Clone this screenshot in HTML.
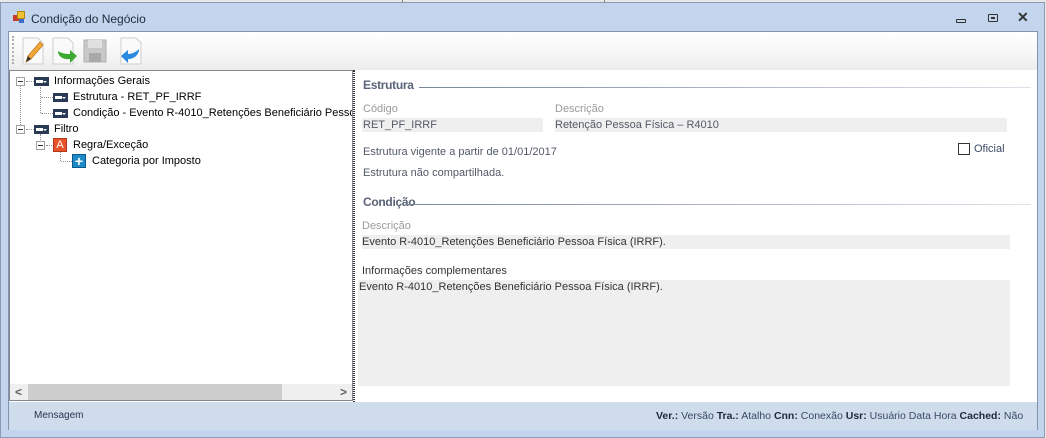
<!DOCTYPE html>
<html><head><meta charset="utf-8"><style>
*{margin:0;padding:0;box-sizing:border-box}
body{width:1046px;height:438px;overflow:hidden;background:#e8e8e8;font-family:"Liberation Sans",sans-serif;font-size:11px;line-height:14px;position:relative}
.abs{position:absolute}
.frame{left:0;top:2px;width:1045px;height:436px;background:#c3d5ec;border:1px solid #8a9bb3}
.title{left:31px;top:12px;font-size:12px;color:#1e2a3a}
.client{left:8px;top:31px;width:1030px;height:399px;background:#fff;border:1px solid #8193ad}
.tb{left:9px;top:32px;width:1028px;height:38px;background:linear-gradient(#ffffff,#f6f6f6 60%,#ececec)}
.tree{left:9px;top:70px;width:344px;height:331px;background:#fff;border:1px solid #828790;overflow:hidden}
.t{position:absolute;color:#000;white-space:nowrap;font-size:11px}
.ico{position:absolute;width:15px;height:9px;background:#2a3a56;border:1px solid #2a3a56}
.ico:before{content:"";position:absolute;left:1px;top:2px;width:7px;height:3px;background:#fff}
.ico:after{content:"";position:absolute;right:1px;top:3px;border:2px solid transparent;border-top:2px solid #fff}
.pm{position:absolute;width:9px;height:9px;border:1px solid #a0a0a0;background:#fff}
.pm:after{content:"";position:absolute;left:1px;top:3px;width:5px;height:1px;background:#333}
.dv{position:absolute;border-left:1px dotted #999;width:0}
.dh{position:absolute;border-top:1px dotted #999;height:0}
.lbl{position:absolute;color:#9a9a9a;white-space:nowrap}
.val{position:absolute;color:#525a66;white-space:nowrap}
.fld{position:absolute;background:#efefef}
.h{position:absolute;font-weight:bold;color:#5a6478;font-size:12px;letter-spacing:-0.3px}
.status{left:9px;top:402px;width:1028px;height:28px;background:#cfdcec}
</style></head><body>
<div class="abs frame"></div>
<div class="abs" style="left:402px;top:0;width:1px;height:3px;background:#888"></div>
<div class="abs" style="left:604px;top:0;width:1px;height:3px;background:#888"></div>
<div class="abs" style="left:13px;top:15px;width:6px;height:6px;background:#c83a2a"></div>
<div class="abs" style="left:17px;top:11px;width:8px;height:8px;background:#f2c230;border:1px solid #b08a10"></div>
<div class="abs" style="left:19px;top:19px;width:5px;height:4px;background:#3a6cc8"></div>
<div class="abs title">Condição do Negócio</div>
<div class="abs" style="left:956px;top:19px;width:10px;height:4px;border:1px solid #333;border-radius:1px"></div>
<div class="abs" style="left:988px;top:14px;width:10px;height:8px;border:1px solid #333;border-radius:1px"><div style="margin:2px 2px;width:4px;height:2px;border:1px solid #333"></div></div>
<div class="abs" style="left:1017px;top:10px;font-size:14px;font-weight:bold;color:#333">✕</div>
<div class="abs client"></div>
<div class="abs tb"></div>
<div class="abs" style="left:12px;top:36px;height:28px;border-left:2px dotted #b0b0b0"></div>
<svg class="abs" style="left:20px;top:35px" width="130" height="32">
 <path d="M3 3h15l5 5v21H3z" fill="#fafafa" stroke="#cfcfcf"/>
 <path d="M6 27l2-6 12-14 3 3-12 14z" fill="#f2a93a" stroke="#c07818" stroke-width="0.8"/>
 <path d="M6 27l2-6 3 3z" fill="#333"/>
 <path d="M33 3h15l5 5v21H33z" fill="#fafafa" stroke="#cfcfcf"/>
 <path d="M38 16c0 6 6 9 12 8v4l7-7-7-6v4c-5 0-9-1-12-3z" fill="#3caa30"/>
 <path d="M64 5h22v22H64z" fill="#c8c8c8" stroke="#b0b0b0"/>
 <path d="M68 5h14v8H68z" fill="#e0e0e0"/>
 <path d="M69 18h12v9H69z" fill="#a8a8a8"/>
 <path d="M101 3h15l5 5v21h-20z" fill="#fafafa" stroke="#cfcfcf"/>
 <path d="M119 14c0 6-5 10-11 10v4l-7-7 7-6v4c4 0 8-2 11-5z" fill="#2a8ae0"/>
</svg>
<div class="abs tree">
 <div class="dv" style="left:10px;top:14px;height:44px"></div>
 <div class="pm" style="left:6px;top:6px"></div>
 <div class="dh" style="left:16px;top:10px;width:8px"></div>
 <div class="ico" style="left:24px;top:6px"></div>
 <div class="t" style="left:44px;top:3px">Informações Gerais</div>
 <div class="dv" style="left:30px;top:16px;height:26px"></div>
 <div class="dh" style="left:31px;top:26px;width:12px"></div>
 <div class="ico" style="left:43px;top:22px"></div>
 <div class="t" style="left:63px;top:19px">Estrutura - RET_PF_IRRF</div>
 <div class="dh" style="left:31px;top:42px;width:12px"></div>
 <div class="ico" style="left:43px;top:38px"></div>
 <div class="t" style="left:63px;top:35px">Condição - Evento R-4010_Retenções Beneficiário Pessoa Física</div>
 <div class="pm" style="left:6px;top:54px"></div>
 <div class="dh" style="left:16px;top:58px;width:8px"></div>
 <div class="ico" style="left:24px;top:54px"></div>
 <div class="t" style="left:44px;top:51px">Filtro</div>
 <div class="dv" style="left:30px;top:63px;height:6px"></div>
 <div class="pm" style="left:26px;top:70px"></div>
 <div class="dh" style="left:36px;top:74px;width:6px"></div>
 <div class="abs" style="left:43px;top:67px;width:14px;height:14px;background:#e8532a;border:1px solid #b0381a;color:#fff;font-size:11px;line-height:12px;text-align:center">A</div>
 <div class="t" style="left:63px;top:67px">Regra/Exceção</div>
 <div class="dv" style="left:50px;top:81px;height:9px"></div>
 <div class="dh" style="left:51px;top:90px;width:11px"></div>
 <div class="abs" style="left:62px;top:83px;width:14px;height:14px;background:#1e8ac8;border:1px solid #0a5a8a;color:#fff;font-size:14px;line-height:12px;text-align:center;font-weight:bold">+</div>
 <div class="t" style="left:82px;top:83px">Categoria por Imposto</div>
 <div class="abs" style="left:0;top:313px;width:342px;height:16px;background:#efefef"></div>
 <div class="abs" style="left:18px;top:313px;width:254px;height:16px;background:#cdcdcd"></div>
 <div class="abs" style="left:5px;top:314px;color:#606060;font-weight:bold;font-size:12px">&lt;</div>
 <div class="abs" style="left:330px;top:314px;color:#606060;font-weight:bold;font-size:12px">&gt;</div>
</div>
<div class="abs" style="left:353px;top:70px;width:2px;height:332px;border-left:1px dotted #333;border-right:1px dotted #333"></div>
<div class="h" style="left:363px;top:78px">Estrutura</div>
<div class="abs" style="left:419px;top:87px;width:612px;height:1px;background:linear-gradient(90deg,#7a869a,#dde2ea)"></div>
<div class="lbl" style="left:363px;top:102px">Código</div>
<div class="fld" style="left:362px;top:118px;width:181px;height:14px"></div>
<div class="val" style="left:363px;top:118px">RET_PF_IRRF</div>
<div class="lbl" style="left:555px;top:102px">Descrição</div>
<div class="fld" style="left:555px;top:118px;width:452px;height:14px"></div>
<div class="val" style="left:555px;top:118px">Retenção Pessoa Física – R4010</div>
<div class="val" style="left:363px;top:145px">Estrutura vigente a partir de 01/01/2017</div>
<div class="abs" style="left:958px;top:143px;width:12px;height:12px;border:1px solid #333;background:#fff"></div>
<div class="val" style="left:974px;top:142px;color:#3a4a66">Oficial</div>
<div class="val" style="left:363px;top:166px">Estrutura não compartilhada.</div>
<div class="h" style="left:363px;top:195px">Condição</div>
<div class="abs" style="left:405px;top:204px;width:626px;height:1px;background:linear-gradient(90deg,#7a869a,#dde2ea)"></div>
<div class="lbl" style="left:362px;top:219px">Descrição</div>
<div class="fld" style="left:362px;top:235px;width:648px;height:14px"></div>
<div class="val" style="left:362px;top:235px;color:#333">Evento R-4010_Retenções Beneficiário Pessoa Física (IRRF).</div>
<div class="val" style="left:362px;top:264px;color:#333">Informações complementares</div>
<div class="fld" style="left:358px;top:280px;width:652px;height:106px"></div>
<div class="val" style="left:359px;top:280px;color:#333">Evento R-4010_Retenções Beneficiário Pessoa Física (IRRF).</div>
<div class="abs status"></div>
<div class="abs" style="left:34px;top:409px;font-size:10px;color:#2a3550">Mensagem</div>
<div class="abs" style="left:656px;top:409px;font-size:10.5px;color:#3a4a66;white-space:nowrap"><b style="color:#1e2a3a">Ver.:</b> Versão <b style="color:#1e2a3a">Tra.:</b> Atalho <b style="color:#1e2a3a">Cnn:</b> Conexão <b style="color:#1e2a3a">Usr:</b> Usuário Data Hora <b style="color:#1e2a3a">Cached:</b> Não</div>
</body></html>
